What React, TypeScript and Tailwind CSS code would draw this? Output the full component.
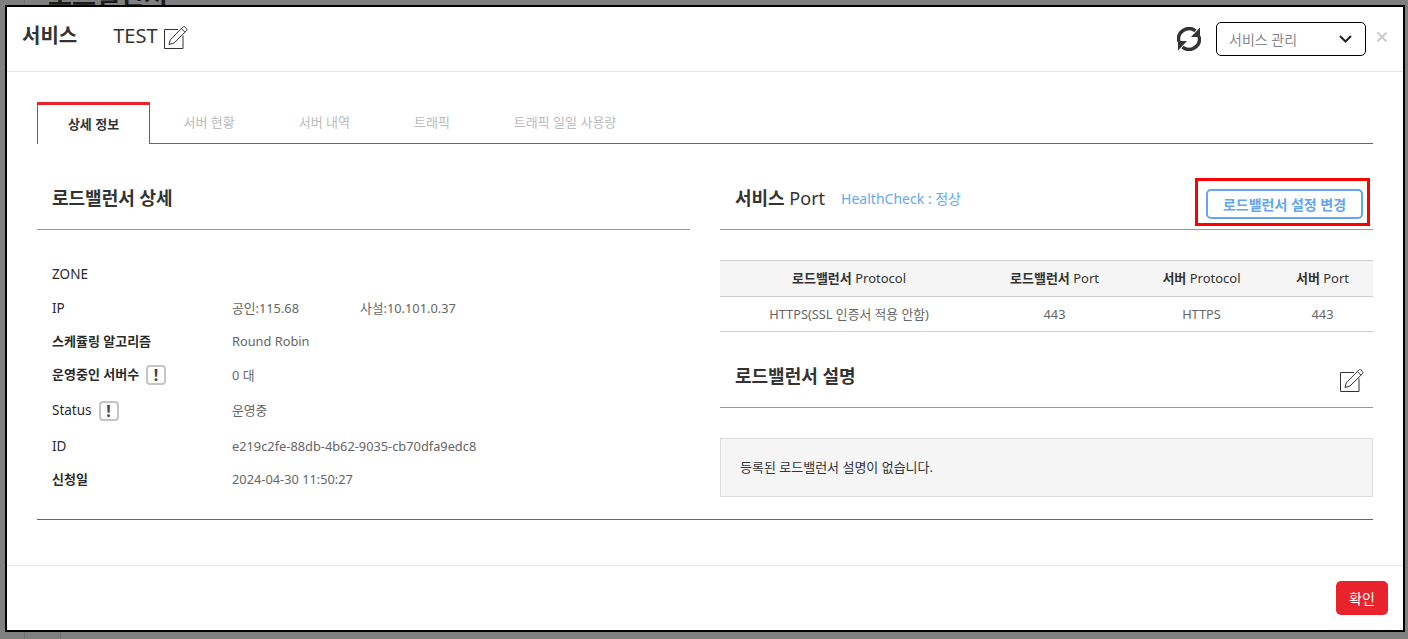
const EditIcon = ({ className }: { className: string }) => (
  <svg className={className} viewBox="0 0 24 24" fill="none" stroke="#333333" strokeWidth={1}>
    <path d="M19 10.500V23.500H0.500V4.500H14" />
    <path d="M5 19.500L6.300 14.800L18.800 2C19.400 1.400 20.300 1.400 20.900 2L22.500 3.600C23.100 4.200 23.100 5.100 22.500 5.700L10 18Z" />
    <path d="M17.300 3.500L21 7.200" />
  </svg>
)

const InfoBadge = () => (
  <span className="ml-[7px] inline-flex h-[20px] w-[20px] items-center justify-center rounded-[4px] border-2 border-[#c4c4c4] text-[16px] leading-none font-bold text-[#444]">
    !
  </span>
)

const SectionTitle = ({ children, right }: { children: React.ReactNode; right?: React.ReactNode }) => (
  <div className="flex h-[60px] items-center justify-between border-b border-[#999] pl-[15px]">
    {children}
    {right}
  </div>
)

const rows = [
  { label: 'ZONE', value: '', height: 'h-[34px]' },
  { label: 'IP', value: '공인:115.68', extra: '사설:10.101.0.37', height: 'h-[34px]' },
  { label: '스케쥴링 알고리즘', value: 'Round Robin', bold: true, height: 'h-[33px]' },
  { label: '운영중인 서버수', value: '0 대', bold: true, badge: true, height: 'h-[34px]' },
  { label: 'Status', value: '운영중', badge: true, height: 'h-[37px]' },
  { label: 'ID', value: 'e219c2fe-88db-4b62-9035-cb70dfa9edc8', height: 'h-[34px]' },
  { label: '신청일', value: '2024-04-30 11:50:27', bold: true, height: 'h-[33px]' },
]

const tabs = ['서버 현황', '서버 내역', '트래픽', '트래픽 일일 사용량']

export default function App() {
  return (
    <div className="relative h-[639px] w-[1408px] overflow-hidden bg-[#808080] pt-[5px] pl-[5px] font-['Noto_Sans','Noto_Sans_CJK_KR',sans-serif] text-[13px] text-[#666]">
      {/* page behind the dimmed backdrop */}
      <div className="absolute top-[-21px] left-[48px] text-[26px] leading-[32px] font-bold text-[#1c1c1c]">로드밸런서</div>
      <div className="absolute top-0 left-[24px] h-full w-px bg-[#707070]" />
      <div className="absolute top-[620px] left-[60px] h-[19px] w-px bg-[#707070]" />

      <div className="relative flex h-[627px] w-[1400px] flex-col border-2 border-black bg-white">
        <div className="flex h-[65px] shrink-0 items-center border-b border-[#e5e5e5] pr-[16px] pl-[15px]">
          <div className="mb-[7px] flex items-center">
            <h1 className="text-[20px] font-bold text-[#333]">서비스</h1>
            <span className="ml-[36px] text-[20px] text-[#333]">TEST</span>
            <EditIcon className="mt-[2px] ml-[6px] h-[24px] w-[24px]" />
          </div>
          <svg className="ml-auto h-[24px] w-[24px]" viewBox="0 0 24 24" fill="none" stroke="#333333">
            <path d="M1.800 14.300A10.500 10.500 0 0 1 18.500 3.800" strokeWidth={3.400} />
            <path d="M22.200 9.700A10.500 10.500 0 0 1 5.500 20.200" strokeWidth={3.400} />
            <path d="M23 0.500V10H14Z" fill="#333333" stroke="none" />
            <path d="M1 23.500V14H10Z" fill="#333333" stroke="none" />
          </svg>
          <div className="ml-[15px] flex h-[34px] w-[150px] items-center justify-between rounded-[5px] border border-black pr-[13px] pl-[12px] text-[#888]">
            <span className="text-[14px]">서비스 관리</span>
            <svg className="h-[10px] w-[13px]" viewBox="0 0 13 10" fill="none" stroke="#222" strokeWidth={2}>
              <path d="M1 2l5.500 5.500L12 2" />
            </svg>
          </div>
          <svg className="mb-[5px] ml-[11px] h-[10px] w-[10px]" viewBox="0 0 10 10" fill="none" stroke="#cccccc" strokeWidth={2}>
            <path d="M0.500 0.500L9.500 9.500M9.500 0.500L0.500 9.500" />
          </svg>
        </div>

        <div className="flex-1 px-[30px] pt-[30px]">
          <div className="flex h-[42px] border-b border-[#666]">
            <div className="-mb-px flex h-[42px] w-[113px] items-center justify-center border-x border-t-[3px] border-x-[#666] border-t-[#e8232b] bg-white font-bold text-[#333]">
              상세 정보
            </div>
            <div className="ml-[1.500px] flex">
              {tabs.map((tab) => (
                <div key={tab} className="flex items-center px-[32px] text-[#bbb]">
                  {tab}
                </div>
              ))}
            </div>
          </div>

          <div className="mt-[26px] grid grid-cols-[653px_653px] gap-x-[30px]">
            <div>
              <SectionTitle>
                <h2 className="mb-[2px] text-[18px] font-bold text-[#333]">로드밸런서 상세</h2>
              </SectionTitle>
              <dl className="mt-[27px] flex flex-col">
                {rows.map((row) => (
                  <div key={row.label} className={`flex items-center pl-[15px] ${row.height}`}>
                    <dt className={`flex w-[180px] shrink-0 items-center text-[#2b2b2b] ${row.bold ? 'text-[13px] font-bold' : 'text-[13.500px]'}`}>
                      {row.label}
                      {row.badge && <InfoBadge />}
                    </dt>
                    <dd className="w-[128px] shrink-0 pt-px text-[12.800px] whitespace-nowrap">{row.value}</dd>
                    {row.extra && <dd className="pt-px text-[12.800px]">{row.extra}</dd>}
                  </div>
                ))}
              </dl>
            </div>

            <div>
              <SectionTitle
                right={
                  <div className="mt-[5px] mr-[3px] border-[3px] border-[#ff0000] pt-[8px] pr-[4px] pb-[4px] pl-[8px]">
                    <button className="flex h-[30px] w-[157px] items-center justify-center rounded-[5px] border-2 border-[#63a5f0] text-[14px] font-bold text-[#63a5f0]">
                      로드밸런서 설정 변경
                    </button>
                  </div>
                }
              >
                <div className="mb-[2px] flex items-center">
                  <h2 className="text-[18px] text-[#333]"><b>서비스</b> Port</h2>
                  <span className="ml-[16px] text-[14px] text-[#64a8f0]">HealthCheck : 정상</span>
                </div>
              </SectionTitle>

              <table className="mt-[30px] w-full table-fixed border-b border-[#ccc] text-center">
                <thead>
                  <tr className="h-[36px] border-y border-[#ccc] bg-[#f5f5f5] text-[#333]">
                    <th className="w-[258px] font-normal"><b>로드밸런서</b> Protocol</th>
                    <th className="w-[153px] font-normal"><b>로드밸런서</b> Port</th>
                    <th className="w-[141px] font-normal"><b>서버</b> Protocol</th>
                    <th className="font-normal"><b>서버</b> Port</th>
                  </tr>
                </thead>
                <tbody className="text-[12.800px]">
                  <tr className="h-[35px]">
                    <td className="pt-px">HTTPS(SSL 인증서 적용 안함)</td>
                    <td className="pt-px">443</td>
                    <td className="pt-px">HTTPS</td>
                    <td className="pt-px">443</td>
                  </tr>
                </tbody>
              </table>

              <div className="mt-[16px]">
                <SectionTitle
                  right={<EditIcon className="mt-[4px] mr-[9px] h-[24px] w-[24px]" />}
                >
                  <h2 className="mb-[3px] text-[18px] font-bold text-[#333]">로드밸런서 설명</h2>
                </SectionTitle>
              </div>

              <div className="mt-[30px] flex h-[59px] items-center border border-[#ddd] bg-[#f5f5f5] pl-[19px] text-[#333]">
                등록된 로드밸런서 설명이 없습니다.
              </div>
            </div>
          </div>

          <div className="mt-[22px] border-b border-[#666]" />
        </div>

        <div className="flex h-[65px] shrink-0 items-center justify-end border-t border-[#e5e5e5] pr-[15px]">
          <button className="h-[34px] w-[52px] rounded-[5px] bg-[#e8232b] text-[14px] text-white">확인</button>
        </div>
      </div>
    </div>
  )
}
